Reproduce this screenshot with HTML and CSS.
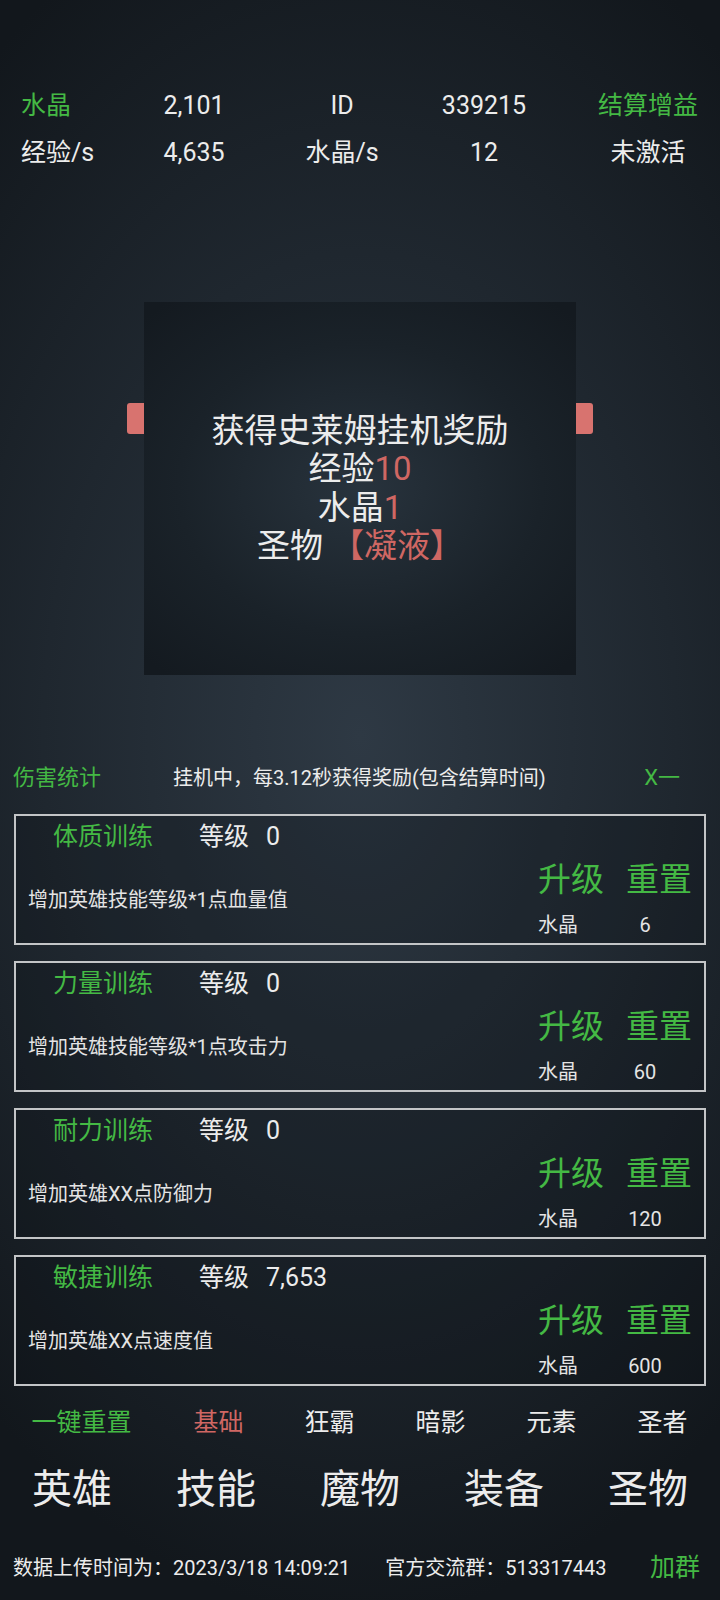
FILE: index.html
```html
<html>
<head>
    <link rel="stylesheet" href="styles.css">
</head>
<body>
    <div class="stats">
        <span class="cell first green">水晶</span>
        <span class="cell">2,101</span>
        <span class="cell">ID</span>
        <span class="cell">339215</span>
        <span class="cell last green">结算增益</span>

        <span class="cell first">经验/s</span>
        <span class="cell">4,635</span>
        <span class="cell">水晶/s</span>
        <span class="cell">12</span>
        <span class="cell last">未激活</span>
    </div>

    <!-- reward popup -->
    <div class="stage">
        <div class="tab tab-left"></div>
        <div class="reward">
            <p>获得史莱姆挂机奖励</p>
            <p>经验<span class="red">10</span></p>
            <p>水晶<span class="red">1</span></p>
            <p>圣物 <span class="red">【凝液】</span></p>
        </div>
        <div class="tab tab-right"></div>
    </div>

    <div class="status">
        <span class="status-title green">伤害统计</span>
        <span class="status-text">挂机中，每3.12秒获得奖励(包含结算时间)</span>
        <span class="status-speed green">X一</span>
    </div>

    <div class="cards">
        <div class="card">
            <div class="card-main">
                <div class="card-title"><span class="green skill">体质训练</span><span>等级</span><span class="level">0</span></div>
                <div class="card-desc">增加英雄技能等级*1点血量值</div>
            </div>
            <div class="card-side">
                <div class="actions green"><span>升级</span><span>重置</span></div>
                <div class="cost"><span>水晶</span><span class="cost-num">6</span></div>
            </div>
        </div>
        <div class="card">
            <div class="card-main">
                <div class="card-title"><span class="green skill">力量训练</span><span>等级</span><span class="level">0</span></div>
                <div class="card-desc">增加英雄技能等级*1点攻击力</div>
            </div>
            <div class="card-side">
                <div class="actions green"><span>升级</span><span>重置</span></div>
                <div class="cost"><span>水晶</span><span class="cost-num">60</span></div>
            </div>
        </div>
        <div class="card">
            <div class="card-main">
                <div class="card-title"><span class="green skill">耐力训练</span><span>等级</span><span class="level">0</span></div>
                <div class="card-desc">增加英雄XX点防御力</div>
            </div>
            <div class="card-side">
                <div class="actions green"><span>升级</span><span>重置</span></div>
                <div class="cost"><span>水晶</span><span class="cost-num">120</span></div>
            </div>
        </div>
        <div class="card">
            <div class="card-main">
                <div class="card-title"><span class="green skill">敏捷训练</span><span>等级</span><span class="level">7,653</span></div>
                <div class="card-desc">增加英雄XX点速度值</div>
            </div>
            <div class="card-side">
                <div class="actions green"><span>升级</span><span>重置</span></div>
                <div class="cost"><span>水晶</span><span class="cost-num">600</span></div>
            </div>
        </div>
    </div>

    <div class="tabs">
        <span class="green">一键重置</span>
        <span class="red">基础</span>
        <span>狂霸</span>
        <span>暗影</span>
        <span>元素</span>
        <span>圣者</span>
    </div>

    <div class="nav">
        <span>英雄</span>
        <span>技能</span>
        <span>魔物</span>
        <span>装备</span>
        <span>圣物</span>
    </div>

    <div class="footer">
        <span>数据上传时间为：2023/3/18 14:09:21</span>
        <span class="group">官方交流群：513317443</span>
        <span class="join green">加群</span>
    </div>
</body>
</html>
```

FILE: styles.css
```css
body {
    margin: 0;
    width: 720px;
    height: 1600px;
    font-family: Roboto, "Noto Sans CJK SC", sans-serif;
    color: #ececec;
    background: radial-gradient(ellipse 80% 55% at 50% 46%, #2e3944 0%, #1f272f 55%, #12171c 100%);
    overflow: hidden;
}
p {
    margin: 0;
}
.green {
    color: #44b944;
}
.red {
    color: #cf6763;
}

/* top stats */
.stats {
    display: grid;
    grid-template-columns: 128px 132px 164px 120px 1fr;
    padding-top: 82px;
    font-size: 25px;
    line-height: 47px;
}
.cell {
    text-align: center;
}
.cell.first {
    text-align: left;
    padding-left: 21px;
}
.cell.last {
    padding-left: 32px;
}

/* reward popup */
.stage {
    display: flex;
    justify-content: center;
    align-items: flex-start;
    margin-top: 126px;
}
.tab {
    width: 17px;
    height: 31px;
    margin-top: 101px;
    background-color: #d8736f;
}
.tab-left {
    border-radius: 3px 0 0 3px;
}
.tab-right {
    border-radius: 0 3px 3px 0;
}
.reward {
    width: 432px;
    height: 373px;
    display: flex;
    flex-direction: column;
    justify-content: center;
    align-items: center;
    font-size: 33px;
    line-height: 38.5px;
    background: radial-gradient(ellipse 70% 65% at 50% 50%, #28333d 0%, #1a2229 60%, #141a20 100%);
}

/* status line */
.status {
    display: flex;
    align-items: center;
    margin-top: 83px;
    padding-left: 13px;
    line-height: 40px;
}
.status-title {
    width: 160px;
    font-size: 22px;
}
.status-text {
    flex: 1;
    font-size: 20px;
}
.status-speed {
    font-size: 22px;
    margin-right: 40px;
}

/* training cards */
.cards {
    display: flex;
    flex-direction: column;
    gap: 16px;
    margin: 16px 14px 0 14px;
}
.card {
    display: flex;
    height: 131px;
    box-sizing: border-box;
    border: 2px solid #c3c5c7;
    background-color: rgba(8, 12, 16, 0.22);
}
.card-main {
    flex: 1;
    padding-top: 4px;
    padding-left: 12px;
}
.card-title {
    display: flex;
    font-size: 25px;
    line-height: 34px;
    padding-left: 25px;
}
.skill {
    width: 146px;
}
.level {
    margin-left: 17px;
}
.card-desc {
    margin-top: 32px;
    font-size: 20px;
    line-height: 28px;
    color: #e4e4e4;
}
.card-side {
    width: 154px;
    padding-right: 12px;
    padding-top: 44px;
}
.actions {
    display: flex;
    gap: 22px;
    font-size: 33px;
    line-height: 40px;
}
.cost {
    display: flex;
    margin-top: 11px;
    font-size: 20px;
    line-height: 28px;
    color: #e4e4e4;
}
.cost-num {
    width: 80px;
    margin-left: 27px;
    text-align: center;
}

/* skill tabs */
.tabs {
    display: grid;
    grid-template-columns: 163px repeat(5, 1fr);
    padding-right: 2px;
    margin-top: 17px;
    font-size: 25px;
    line-height: 40px;
    text-align: center;
}

/* main nav */
.nav {
    display: grid;
    grid-template-columns: repeat(5, 1fr);
    margin-top: 22px;
    font-size: 40px;
    line-height: 50px;
    text-align: center;
}

/* footer */
.footer {
    display: flex;
    align-items: center;
    margin-top: 38px;
    padding: 0 20px 0 13px;
    font-size: 20px;
    line-height: 30px;
}
.group {
    margin-left: 35px;
}
.join {
    margin-left: auto;
    font-size: 25px;
}
```
